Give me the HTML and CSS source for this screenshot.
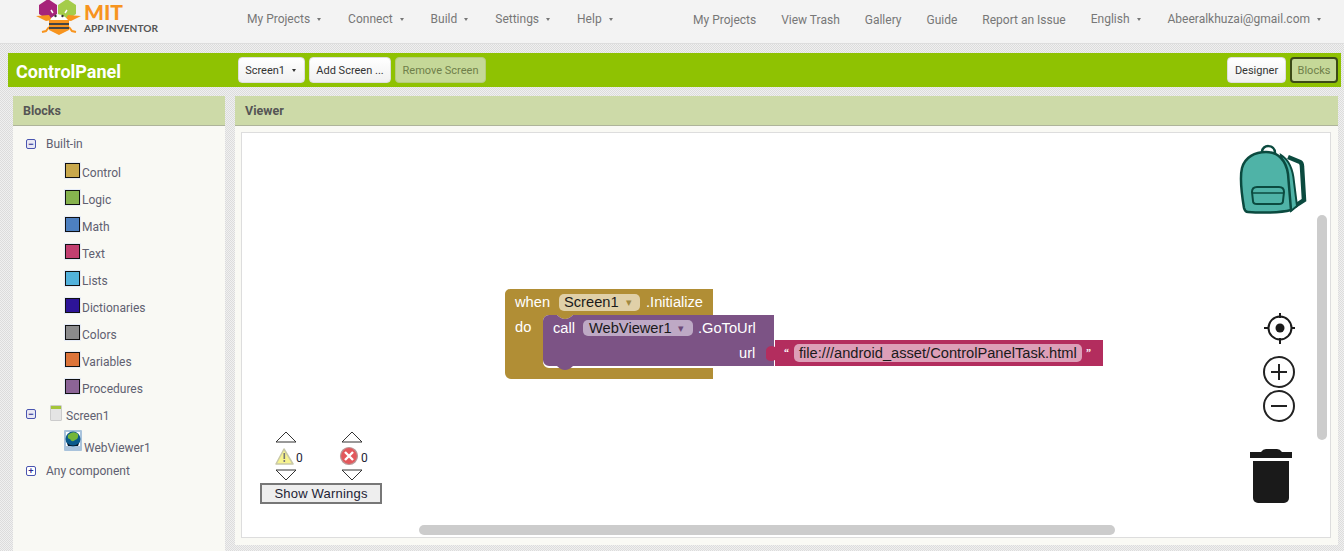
FILE: index.html
```html
<!DOCTYPE html>
<html lang="en">
<head>
  <meta charset="UTF-8" />
  <meta name="viewport" content="width=device-width, initial-scale=1.0" />
  <title>MIT App Inventor</title>
  <link rel="stylesheet" href="styles.css">
</head>
<body>
  <header class="topbar">
    <svg class="logo" viewBox="30 0 135 44" width="135" height="44">
      <polygon points="39,5 48,-1 57,5 57,14 48,20 39,14" fill="#a6247a"/>
      <polygon points="58,5 67,-1 76,5 76,14 67,20 58,14" fill="#a4cc4a"/>
      <path d="M36 16 L49 15 L52 20 L46 21 Z M81 16 L68 15 L65 20 L71 21 Z" fill="#f7941e"/>
      <path d="M49 27 L46 31 L42 32 M69 27 L72 31 L76 32" fill="none" stroke="#f7941e" stroke-width="2"/>
      <path d="M50 20 Q59 9 68 20 Z" fill="#fff"/>
      <path d="M53 13 L51 10 M65 13 L67 10" stroke="#fff" stroke-width="1.5"/>
      <circle cx="55.500" cy="16" r="1.2" fill="#333"/>
      <circle cx="62.500" cy="16" r="1.2" fill="#333"/>
      <rect x="49" y="20" width="20" height="3" fill="#f7941e"/>
      <rect x="49" y="23" width="20" height="2" fill="#444"/>
      <rect x="49" y="25" width="20" height="2" fill="#f7941e"/>
      <rect x="49" y="27" width="20" height="2" fill="#444"/>
      <polygon points="49,29 69,29 69,30 59,35 49,30" fill="#f7941e"/>
      <text x="84" y="20" class="logo-mit" textLength="39" lengthAdjust="spacingAndGlyphs">MIT</text>
      <text x="84" y="32" class="logo-sub" textLength="74" lengthAdjust="spacingAndGlyphs">APP INVENTOR</text>
    </svg>
    <nav class="nav nav-left">
      <a>My Projects <i class="caret"></i></a>
      <a>Connect <i class="caret"></i></a>
      <a>Build <i class="caret"></i></a>
      <a>Settings <i class="caret"></i></a>
      <a>Help <i class="caret"></i></a>
    </nav>
    <nav class="nav nav-right">
      <a class="low">My Projects</a>
      <a class="low">View Trash</a>
      <a class="low">Gallery</a>
      <a class="low">Guide</a>
      <a class="low">Report an Issue</a>
      <a>English <i class="caret"></i></a>
      <a>Abeeralkhuzai@gmail.com <i class="caret"></i></a>
    </nav>
  </header>

  <div class="toolbar">
    <div class="project-name">ControlPanel</div>
    <button class="btn btn-screen">Screen1 <i class="caret dark"></i></button>
    <button class="btn btn-add">Add Screen ...</button>
    <button class="btn btn-off">Remove Screen</button>
    <div class="toolbar-right">
      <button class="btn btn-designer">Designer</button>
      <button class="btn btn-blocks">Blocks</button>
    </div>
  </div>

  <main class="panels">
    <section class="panel panel-blocks">
      <h2 class="panel-title">Blocks</h2>
      <ul class="tree">
        <li class="tree-top"><span class="toggle">&minus;</span><span>Built-in</span></li>
        <li class="tree-cat first"><span class="swatch s-control"></span>Control</li>
        <li class="tree-cat"><span class="swatch s-logic"></span>Logic</li>
        <li class="tree-cat"><span class="swatch s-math"></span>Math</li>
        <li class="tree-cat"><span class="swatch s-text"></span>Text</li>
        <li class="tree-cat"><span class="swatch s-lists"></span>Lists</li>
        <li class="tree-cat"><span class="swatch s-dict"></span>Dictionaries</li>
        <li class="tree-cat"><span class="swatch s-colors"></span>Colors</li>
        <li class="tree-cat"><span class="swatch s-vars"></span>Variables</li>
        <li class="tree-cat"><span class="swatch s-procs"></span>Procedures</li>
        <li class="tree-screen"><span class="toggle">&minus;</span><span class="phone"></span><span>Screen1</span></li>
        <li class="tree-comp">
          <span class="web-icon"><svg viewBox="0 0 18 21" width="18" height="21">
            <rect width="18" height="21" rx="1" fill="#a9c3dc"/>
            <rect x="2" y="2" width="14" height="14" fill="#fff"/>
            <circle cx="9" cy="9" r="7.5" fill="#0b5a8c"/>
            <path d="M4 5 Q9 0 14 4 Q15 9 11 10 Q8 13 6 9 Q3 9 4 5 Z" fill="#74b63a"/>
            <path d="M3 13 Q9 18 15 13 L14 16 L4 16 Z" fill="#06182a"/>
          </svg></span>
          <span>WebViewer1</span>
        </li>
        <li class="tree-any"><span class="toggle plus">+</span><span>Any component</span></li>
      </ul>
    </section>

    <section class="panel panel-viewer">
      <h2 class="panel-title">Viewer</h2>
      <div class="workspace">
        <svg class="canvas" viewBox="242 133 1087 404" width="1087" height="404">
          <!-- when block -->
          <path d="M505 294 a5 5 0 0 1 5 -5 H713 V315 H573 q-4 4 -8 4 q-4 0 -8 -4 H549 a6 6 0 0 0 -6 6 V362 a6 6 0 0 0 6 6 H713 V379 H511 a6 6 0 0 1 -6 -6 Z" fill="#b18e35"/>
          <text x="515" y="307" class="bk">when</text>
          <rect x="559" y="294" width="81" height="17" rx="5" fill="#e0d0a8"/>
          <text x="564" y="307" class="bk dark">Screen1</text>
          <text x="626" y="306" class="arrow" fill="#a08840">&#9662;</text>
          <text x="646" y="307" class="bk">.Initialize</text>
          <text x="515" y="332" class="bk">do</text>

          <!-- call block -->
          <path d="M543 321 a6 6 0 0 1 6 -6 H557 q4 4 8 4 q4 0 8 -4 H774 V366 H573 q-4 4 -8 4 q-4 0 -8 -4 H549 a6 6 0 0 1 -6 -6 Z" fill="#7c5385"/>
          <text x="553" y="333" class="bk">call</text>
          <rect x="583" y="320" width="110" height="16" rx="5" fill="#bea9c5"/>
          <text x="589" y="333" class="bk dark">WebViewer1</text>
          <text x="678" y="332" class="arrow" fill="#6d4a78">&#9662;</text>
          <text x="698" y="333" class="bk">.GoToUrl</text>
          <text x="739" y="358" class="bk">url</text>

          <!-- text block -->
          <path d="M775 340 H1103 V366 H775 V360 C772 362 767 361 766 358 V350 C767 346 772 345 775 347 Z" fill="#b32d5e"/>
          <rect x="794" y="344" width="288" height="18" rx="5" fill="#dd9fb8"/>
          <text x="799" y="358" class="bk dark">file:///android_asset/ControlPanelTask.html</text>
          <text x="784" y="356" class="quote">&#8220;</text>
          <text x="1086" y="356" class="quote">&#8221;</text>

          <!-- warning indicator -->
          <path d="M276 442 L286 432 L296 442 Z M342 442 L352 432 L362 442 Z M276 470 L286 480 L296 470 Z M342 470 L352 480 L362 470 Z" fill="#fff" stroke="#333" stroke-width="1"/>
          <path d="M284 449 L293 464 H276 Z" fill="#f7f38e" stroke="#c8c8a8" stroke-width="1.5" stroke-linejoin="round"/>
          <rect x="283.500" y="453" width="1.600" height="6" fill="#777"/>
          <rect x="283.500" y="460" width="1.600" height="2" fill="#777"/>
          <text x="296" y="462" class="count">0</text>
          <circle cx="349" cy="456" r="8.500" fill="#e2585c" stroke="#b89a9a" stroke-width="1.200"/>
          <path d="M345 452 L353 460 M353 452 L345 460" stroke="#fff" stroke-width="2.400"/>
          <text x="361" y="462" class="count">0</text>

          <!-- backpack -->
          <path d="M1288 157 L1300 162 Q1302 163 1302 167 L1304 200 L1295 206" fill="none" stroke="#0b4a3f" stroke-width="4.500"/>
          <path d="M1262 152 C1262 144 1275 144 1275 153" fill="none" stroke="#0b4a3f" stroke-width="2.500"/>
          <path d="M1281 155 C1289 160 1293 170 1294 182 L1297 206 L1291 211 Z" fill="#4fb3a7" stroke="#0b4a3f" stroke-width="2"/>
          <path d="M1244 208 C1241 190 1240 176 1242 168 C1245 157 1255 152 1266 152 C1278 152 1286 160 1288 174 L1291 210 C1280 213 1260 213 1248 212 Q1245 212 1244 208 Z" fill="#4fb3a7" stroke="#0b4a3f" stroke-width="2.500"/>
          <path d="M1252 192 Q1252 187 1257 187 H1279 Q1284 187 1284 192 L1283 201 Q1283 204 1279 204 H1257 Q1253 204 1253 201 Z" fill="none" stroke="#0b4a3f" stroke-width="2"/>
          <path d="M1252 193 H1284" stroke="#0b4a3f" stroke-width="1.500"/>

          <!-- compass -->
          <circle cx="1280" cy="328" r="11.500" fill="#fff" stroke="#1a1a1a" stroke-width="2"/>
          <circle cx="1280" cy="328" r="4.500" fill="#1a1a1a"/>
          <path d="M1280 313 V318 M1280 338 V344 M1264 328 H1269 M1291 328 H1295" stroke="#1a1a1a" stroke-width="2"/>

          <!-- zoom -->
          <circle cx="1279" cy="372" r="15" fill="#fff" stroke="#222" stroke-width="2"/>
          <path d="M1271 372 H1287 M1279 364 V380" stroke="#222" stroke-width="2"/>
          <circle cx="1279" cy="406" r="15" fill="#fff" stroke="#222" stroke-width="2"/>
          <path d="M1271 406 H1287" stroke="#222" stroke-width="2"/>

          <!-- trash -->
          <path d="M1250 452 H1261 Q1263 449 1266 449 H1277 Q1280 449 1282 452 H1292 V458 H1250 Z" fill="#1a1a1a"/>
          <path d="M1253 461 H1289 V498 a5 5 0 0 1 -5 5 H1258 a5 5 0 0 1 -5 -5 Z" fill="#1a1a1a"/>
        </svg>
        <button class="show-warnings">Show Warnings</button>
        <div class="scroll scroll-v"></div>
        <div class="scroll scroll-h"></div>
      </div>
    </section>
  </main>
</body>
</html>
```

FILE: styles.css
```css
html, body {
  margin: 0;
  height: 551px;
  overflow: hidden;
}
body {
  font-family: Roboto, 'Liberation Sans', sans-serif;
  color: #555;
  background: repeating-conic-gradient(#f0f0f0 0 25%, #dcdcdc 0 50%) 0 0 / 2px 2px;
}
.topbar {
  height: 44px;
  background: #f3f3f3;
  border-bottom: 1px solid #ddd;
  box-sizing: border-box;
  display: flex;
  align-items: center;
  font-size: 12px;
  color: #777;
}
.logo {
  margin-left: 30px;
  flex: none;
  align-self: flex-start;
}
.logo-mit {
  font: 900 20px Lato, sans-serif;
  fill: #f7941e;
}
.logo-sub {
  font: bold 10px Lato, sans-serif;
  fill: #555;
}
.nav {
  display: flex;
  gap: 25px;
  white-space: nowrap;
}
.nav a {
  display: block;
  padding-bottom: 6px;
}
.nav a.low {
  padding: 1px 0 5px;
}
.nav-left {
  margin-left: 82px;
}
.nav-right {
  margin-left: auto;
  padding-right: 21px;
}
.caret {
  display: inline-block;
  width: 0;
  height: 0;
  margin: 0 2px 2px 4px;
  border-left: 2.5px solid transparent;
  border-right: 2.5px solid transparent;
  border-top: 3px solid #777;
}
.caret.dark {
  border-top-color: #333;
}

.toolbar {
  margin: 9px 3px 0 8px;
  height: 34px;
  background: #8fc202;
  display: flex;
  align-items: center;
  gap: 4px;
  padding: 0 3px 0 8px;
}
.project-name {
  width: 218px;
  padding-top: 2px;
  font-size: 18px;
  font-weight: bold;
  color: #fff;
}
.btn {
  height: 26px;
  padding: 0;
  font: 11px Roboto, sans-serif;
  color: #333;
  background: linear-gradient(#fff, #f0f0f0);
  border: 1px solid #ddd;
  border-radius: 4px;
}
.btn-screen { width: 67px; }
.btn-add { width: 82px; }
.btn-off {
  width: 91px;
  color: #6f7f4a;
  background: #c5d898;
  border-color: #b5cb7e;
}
.toolbar-right {
  margin-left: auto;
  display: flex;
  gap: 4px;
}
.btn-designer { width: 59px; }
.btn-blocks {
  width: 48px;
  color: #6f7f4a;
  background: #c5d898;
  border: 2px solid #3c4a18;
}

.panels {
  display: flex;
  gap: 10px;
  padding: 9px 6px 0 13px;
}
.panel {
  background: #f9f9f4;
  box-sizing: border-box;
}
.panel-blocks {
  width: 212px;
  height: 460px;
}
.panel-viewer {
  flex: 1;
  height: 449px;
  padding-bottom: 6px;
}
.panel-title {
  margin: 0;
  height: 30px;
  box-sizing: border-box;
  padding: 7px 10px 0;
  font-size: 12.5px;
  font-weight: bold;
  color: #555;
  background: #cddaa8;
  border-bottom: 1px solid #aeb49a;
}

.tree {
  list-style: none;
  margin: 0;
  padding: 4px 0 0 13px;
  font-size: 12px;
  color: #606070;
}
.tree li {
  display: flex;
  align-items: center;
}
.toggle {
  width: 8px;
  height: 8px;
  border: 1px solid #4a55b0;
  border-radius: 2px;
  background: #e8e8f4;
  color: #2a2a90;
  font: bold 9px/8px 'Liberation Sans', sans-serif;
  text-align: center;
  flex: none;
}
.toggle.plus {
  background: #fff;
}
.tree-top {
  height: 28px;
  gap: 10px;
}
.tree-cat {
  height: 27px;
  padding-left: 39px;
  padding-top: 3px;
  box-sizing: border-box;
}
.swatch {
  width: 13px;
  height: 13px;
  margin: -6px 2px 0 0;
  border: 1px solid #111;
  box-shadow: 0 0 0 1px #e6ecf8;
  flex: none;
}
.s-control { background: #c8a84c; }
.s-logic { background: #86b24e; }
.s-math { background: #4d80c0; }
.s-text { background: #c23f70; }
.s-lists { background: #52b2dc; }
.s-dict { background: #2d1498; }
.s-colors { background: #8c8c8c; }
.s-vars { background: #dc743a; }
.s-procs { background: #8c6496; }
.tree-screen {
  height: 26px;
  padding-top: 4px;
  box-sizing: border-box;
}
.tree-screen .toggle {
  margin-top: -4px;
}
.phone {
  width: 10px;
  height: 14px;
  margin: -6px 4px 0 14px;
  background: linear-gradient(#a4c639 0 3px, #e4e4e4 3px);
  border: 1px solid #ccc;
  border-radius: 1px;
  flex: none;
}
.tree-comp {
  height: 33px;
  padding-left: 38px;
  box-sizing: border-box;
  align-items: flex-start !important;
  padding-top: 3px;
}
.web-icon {
  height: 21px;
  margin-right: 2px;
}
.tree-comp span:last-child {
  padding-top: 11px;
}
.tree-any {
  height: 22px;
  gap: 10px;
}

.workspace {
  position: relative;
  margin: 6px 7px 0 6px;
  height: 406px;
  box-sizing: border-box;
  background: #fff;
  border: 1px solid #ddd;
  overflow: hidden;
}
.canvas {
  display: block;
}
.bk {
  font: 14.67px 'Liberation Sans', Arial, sans-serif;
  fill: #fff;
}
.bk.dark {
  fill: #1a1a1a;
}
.arrow {
  font: 11px 'DejaVu Sans', sans-serif;
}
.quote {
  font: bold 10px 'Liberation Serif', serif;
  fill: #fff;
}
.count {
  font: 12px Roboto, sans-serif;
  fill: #223;
}
.show-warnings {
  position: absolute;
  left: 18px;
  top: 350px;
  width: 122px;
  height: 21px;
  padding: 0;
  box-sizing: border-box;
  background: #eee;
  border: 2px solid #777;
  font: 13px 'Liberation Sans', Arial, sans-serif;
  letter-spacing: 0.2px;
  color: #223;
}
.scroll {
  position: absolute;
  background: #ccc;
  border-radius: 5px;
}
.scroll-v {
  left: 1075px;
  top: 82px;
  width: 10px;
  height: 225px;
}
.scroll-h {
  left: 177px;
  top: 392px;
  width: 696px;
  height: 10px;
}
```
